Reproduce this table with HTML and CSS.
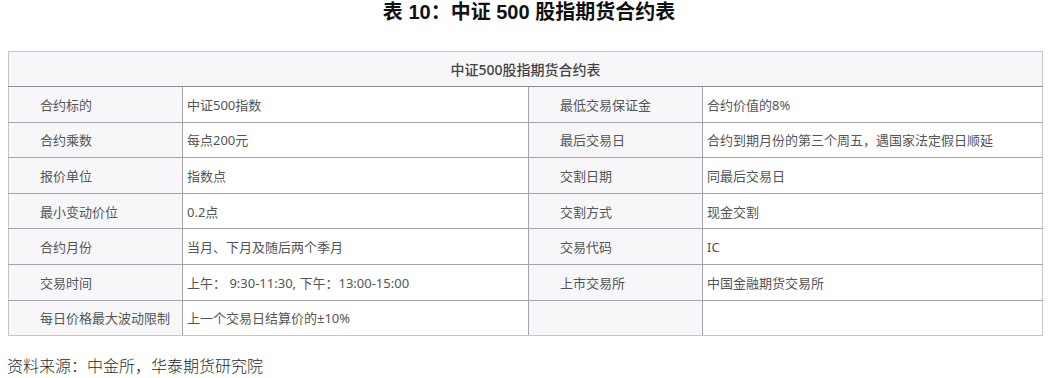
FILE: index.html
```html
<!DOCTYPE html>
<html lang="zh-CN">
<head>
<meta charset="utf-8">
<link rel="stylesheet" href="styles.css">
</head>
<body>
<h1 class="title">表 10：中证 500 股指期货合约表</h1>
<table class="spec">
  <colgroup>
    <col class="c1"><col class="c2"><col class="c3"><col class="c4">
  </colgroup>
  <thead>
    <tr><th colspan="4" class="head">中证500股指期货合约表</th></tr>
  </thead>
  <tbody>
    <tr><td class="lbl">合约标的</td><td class="val">中证500指数</td><td class="lbl">最低交易保证金</td><td class="val">合约价值的8%</td></tr>
    <tr><td class="lbl">合约乘数</td><td class="val">每点200元</td><td class="lbl">最后交易日</td><td class="val">合约到期月份的第三个周五，遇国家法定假日顺延</td></tr>
    <tr><td class="lbl">报价单位</td><td class="val">指数点</td><td class="lbl">交割日期</td><td class="val">同最后交易日</td></tr>
    <tr><td class="lbl">最小变动价位</td><td class="val">0.2点</td><td class="lbl">交割方式</td><td class="val">现金交割</td></tr>
    <tr><td class="lbl">合约月份</td><td class="val">当月、下月及随后两个季月</td><td class="lbl">交易代码</td><td class="val">IC</td></tr>
    <tr><td class="lbl">交易时间</td><td class="val">上午： 9:30-11:30, 下午：13:00-15:00</td><td class="lbl">上市交易所</td><td class="val">中国金融期货交易所</td></tr>
    <tr><td class="lbl">每日价格最大波动限制</td><td class="val">上一个交易日结算价的±10%</td><td class="lbl"></td><td class="val"></td></tr>
  </tbody>
</table>
<p class="source">资料来源：中金所，华泰期货研究院</p>
</body>
</html>
```

FILE: styles.css
```css
html, body {
  margin: 0;
  padding: 0;
  background: #ffffff;
}
body {
  width: 1058px;
  height: 378px;
  overflow: hidden;
  font-family: "Noto Sans", "Noto Sans CJK SC", sans-serif;
}
.title {
  margin: 0;
  padding-top: 0;
  height: 51px;
  box-sizing: border-box;
  text-align: center;
  font-family: "Liberation Sans", "Noto Sans CJK SC", sans-serif;
  font-weight: bold;
  font-size: 20px;
  line-height: 24px;
  color: #111;
}
.spec {
  margin-left: 8px;
  width: 1034px;
  border-collapse: collapse;
  table-layout: fixed;
  border: 1px solid #c4c4ca;
  font-size: 13px;
  color: #555;
}
.c1 { width: 174px; }
.c2 { width: 346px; }
.c3 { width: 174px; }
.c4 { width: 340px; }
.head {
  height: 34px;
  padding: 0;
  background: #f7f7fa;
  font-size: 14px;
  font-weight: 500;
  color: #444;
  text-align: center;
  border-bottom: 1px solid #8e8e98;
}
.spec td {
  height: 34.6px;
  padding: 0;
  border: 1px solid #a4a4ac;
  vertical-align: middle;
  white-space: nowrap;
}
.spec tr:last-child td { border-bottom-color: #c4c4ca; }
.spec td:first-child { border-left-color: #c4c4ca; }
.spec td:last-child { border-right-color: #c4c4ca; }
.lbl {
  background: #f7f7fa;
  padding-left: 31px !important;
}
.val {
  background: #ffffff;
  padding-left: 4px !important;
}
.source {
  margin: 18px 0 0 7px;
  font-size: 16px;
  line-height: 22px;
  color: #2a2a2a;
  font-weight: 300;
  font-family: "Noto Sans CJK SC", sans-serif;
}
```
